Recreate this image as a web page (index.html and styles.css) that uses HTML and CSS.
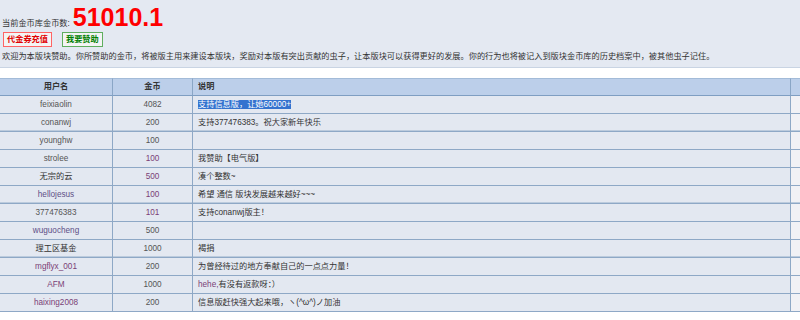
FILE: index.html
```html
<!DOCTYPE html>
<html lang="zh">
<head>
<meta charset="utf-8">
<title>金币库</title>
<link rel="stylesheet" href="styles.css">
</head>
<body>
<div class="top">
  <div class="total"><span class="label">当前金币库金币数:</span><span class="amount">51010.1</span></div>
  <div class="actions">
    <span class="btn btn-red">代金券充值</span>
    <span class="btn btn-green">我要赞助</span>
  </div>
  <p class="intro">欢迎为本版块赞助。你所赞助的金币，将被版主用来建设本版块，奖励对本版有突出贡献的虫子，让本版块可以获得更好的发展。你的行为也将被记入到版块金币库的历史档案中，被其他虫子记住。</p>
</div>
<table class="donors">
  <colgroup><col class="c-user"><col class="c-coin"><col class="c-note"><col class="c-extra"></colgroup>
  <thead>
    <tr><th class="center">用户名</th><th class="center">金币</th><th class="left">说明</th><th class="extra"></th></tr>
  </thead>
  <tbody>
    <tr><td class="center">feixiaolin</td><td class="center">4082</td><td class="left"><span class="sel">支持信息版，让她60000+</span></td><td class="extra"></td></tr>
    <tr class="dbl"><td class="center">conanwj</td><td class="center">200</td><td class="left">支持377476383。祝大家新年快乐</td><td class="extra"></td></tr>
    <tr><td class="center">younghw</td><td class="center">100</td><td class="left"></td><td class="extra"></td></tr>
    <tr><td class="center">strolee</td><td class="center link">100</td><td class="left">我赞助【电气版】</td><td class="extra"></td></tr>
    <tr><td class="center dark">无宗的云</td><td class="center link">500</td><td class="left">凑个整数~</td><td class="extra"></td></tr>
    <tr class="dbl"><td class="center link2">hellojesus</td><td class="center link">100</td><td class="left">希望 通信 版块发展越来越好~~~</td><td class="extra"></td></tr>
    <tr><td class="center">377476383</td><td class="center link">101</td><td class="left">支持conanwj版主！</td><td class="extra"></td></tr>
    <tr><td class="center link2">wuguocheng</td><td class="center">500</td><td class="left"></td><td class="extra"></td></tr>
    <tr class="dbl"><td class="center dark">理工区基金</td><td class="center">1000</td><td class="left">褐捐</td><td class="extra"></td></tr>
    <tr><td class="center link">mgflyx_001</td><td class="center">200</td><td class="left">为曾经待过的地方奉献自己的一点点力量！</td><td class="extra"></td></tr>
    <tr><td class="center link">AFM</td><td class="center">1000</td><td class="left"><span class="link">hehe,</span>有没有返款呀：）</td><td class="extra"></td></tr>
    <tr><td class="center link">haixing2008</td><td class="center">200</td><td class="left">信息版赶快强大起来哦，ヽ(^ω^)ノ加油</td><td class="extra"></td></tr>
  </tbody>
</table>
</body>
</html>
```
FILE: styles.css
```css
html, body {
  margin: 0;
  padding: 0;
  background: #ffffff;
  overflow: hidden;
  font-family: "Liberation Sans", "Noto Sans CJK SC", sans-serif;
  font-size: 8.2px;
  color: #333;
}

.top {
  background: #e4e9f2;
  padding: 0 2px 4px 2px;
  border-bottom: 1px solid #c9d4e3;
  margin-bottom: 10px;
}

.total {
  padding-top: 3px;
  height: 29px;
  line-height: 28px;
  white-space: nowrap;
}

.label {
  color: #333;
}

.amount {
  color: #ff0000;
  font-weight: bold;
  font-size: 25px;
  margin-left: 3px;
}

.actions {
  display: flex;
  gap: 10px;
  padding-left: 1px;
  height: 15px;
}

.btn {
  display: inline-block;
  height: 13px;
  line-height: 13px;
  padding: 0 3px;
  font-weight: bold;
  background: #f4f4f4;
}

.btn-red {
  border: 1px solid #ff6464;
  color: #e00000;
}

.btn-green {
  border: 1px solid #5fae5f;
  color: #008000;
}

.intro {
  margin: 4px 0 0 0;
  line-height: 12px;
  white-space: nowrap;
  color: #333;
}

.donors {
  width: 812px;
  table-layout: fixed;
  border-collapse: separate;
  border-spacing: 0;
}

.c-user { width: 113px; }
.c-coin { width: 80px; }
.c-note { width: 598px; }
.c-extra { width: 21px; }

.donors th {
  background: #bccfea;
  border-top: 1px solid #a3bbd8;
  border-bottom: 1px solid #7f9ec2;
  border-right: 1px solid #8aa6c6;
  height: 16px;
  line-height: 16px;
  padding: 0;
  font-weight: bold;
  color: #333;
}

.donors td {
  background: #e3e8f1;
  border-bottom: 1px solid #8ea8c6;
  border-right: 1px solid #8ea8c6;
  height: 17px;
  line-height: 17px;
  padding: 0;
  color: #555;
  white-space: nowrap;
  overflow: hidden;
}

.donors tr.dbl td {
  box-shadow: inset 0 -1px 0 #bccbdd;
}

.donors th.extra { border-right: none; }
.donors td.extra {
  background: #f1f1f5;
  border-right: none;
}

.center { text-align: center; }
.donors th.left, .donors td.left { text-align: left; padding-left: 5px; }

.donors td.left { color: #333; }
.donors td.link, .link { color: #7a3f76; }
.donors td.link2 { color: #5e4f86; }
.donors td.dark { color: #333; }

.sel {
  background: #3473cf;
  color: #ffffff;
}
```
